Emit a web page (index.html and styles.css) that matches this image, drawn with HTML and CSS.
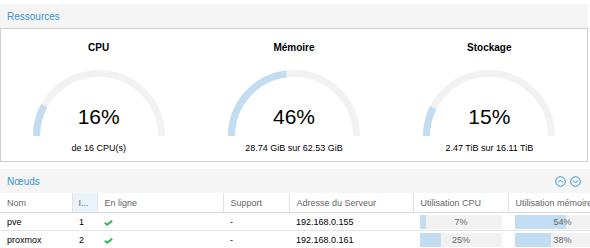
FILE: index.html
```html
<!DOCTYPE html>
<html lang="fr">
<head>
<meta charset="UTF-8" />
<title>Centre de données</title>
<link rel="stylesheet" href="styles.css">
</head>
<body>

<div class="panel res-panel">
  <div class="panel-head">Ressources</div>
  <div class="panel-body gauges">
    <div class="gauge">
      <div class="gauge-title">CPU</div>
      <div class="gauge-dial">
        <svg width="132" height="66" viewBox="0 0 132 66">
          <path class="track" d="M3.5 66 A62.5 62.5 0 0 1 128.5 66" />
          <path class="fill" d="M3.5 66 A62.5 62.5 0 0 1 128.5 66" pathLength="100" stroke-dasharray="16 100" />
        </svg>
        <div class="gauge-value">16%</div>
      </div>
      <div class="gauge-text">de 16 CPU(s)</div>
    </div>
    <div class="gauge">
      <div class="gauge-title">Mémoire</div>
      <div class="gauge-dial">
        <svg width="132" height="66" viewBox="0 0 132 66">
          <path class="track" d="M3.5 66 A62.5 62.5 0 0 1 128.5 66" />
          <path class="fill" d="M3.5 66 A62.5 62.5 0 0 1 128.5 66" pathLength="100" stroke-dasharray="46 100" />
        </svg>
        <div class="gauge-value">46%</div>
      </div>
      <div class="gauge-text">28.74 GiB sur 62.53 GiB</div>
    </div>
    <div class="gauge">
      <div class="gauge-title">Stockage</div>
      <div class="gauge-dial">
        <svg width="132" height="66" viewBox="0 0 132 66">
          <path class="track" d="M3.5 66 A62.5 62.5 0 0 1 128.5 66" />
          <path class="fill" d="M3.5 66 A62.5 62.5 0 0 1 128.5 66" pathLength="100" stroke-dasharray="15 100" />
        </svg>
        <div class="gauge-value">15%</div>
      </div>
      <div class="gauge-text">2.47 TiB sur 16.11 TiB</div>
    </div>
  </div>
</div>

<div class="panel nodes-panel">
  <div class="panel-head">
    <span>Nœuds</span>
    <span class="tools">
      <svg width="11" height="11" viewBox="0 0 11 11"><circle cx="5.5" cy="5.5" r="4.8" /><path d="M3 6.6 L5.5 4.1 L8 6.6" /></svg>
      <svg width="11" height="11" viewBox="0 0 11 11"><circle cx="5.5" cy="5.5" r="4.8" /><path d="M3 4.4 L5.5 6.9 L8 4.4" /></svg>
    </span>
  </div>
  <table class="grid">
    <colgroup>
      <col style="width:72px"><col style="width:25px"><col style="width:126px"><col style="width:66px">
      <col style="width:124px"><col style="width:95px"><col style="width:108px">
    </colgroup>
    <thead>
      <tr>
        <th>Nom</th><th class="sorted">I...</th><th>En ligne</th><th>Support</th>
        <th>Adresse du Serveur</th><th>Utilisation CPU</th><th>Utilisation mémoire</th>
      </tr>
    </thead>
    <tbody>
      <tr>
        <td>pve</td><td>1</td>
        <td><svg class="check" width="9" height="6" viewBox="0 0 9 6"><path d="M0.8 2.6 L3.2 4.8 L8.2 0.8" /></svg></td>
        <td>-</td><td>192.168.0.155</td>
        <td class="barcell"><div class="bar"><div class="bar-fill" style="width:7%"></div><span>7%</span></div></td>
        <td class="barcell"><div class="bar"><div class="bar-fill" style="width:54%"></div><span>54%</span></div></td>
      </tr>
      <tr>
        <td>proxmox</td><td>2</td>
        <td><svg class="check" width="9" height="6" viewBox="0 0 9 6"><path d="M0.8 2.6 L3.2 4.8 L8.2 0.8" /></svg></td>
        <td>-</td><td>192.168.0.161</td>
        <td class="barcell"><div class="bar"><div class="bar-fill" style="width:25%"></div><span>25%</span></div></td>
        <td class="barcell"><div class="bar"><div class="bar-fill" style="width:38%"></div><span>38%</span></div></td>
      </tr>
    </tbody>
  </table>
</div>

</body>
</html>
```
FILE: styles.css
```css
html, body { margin: 0; padding: 0; background: #fff; overflow: hidden; }
body { font-family: "Liberation Sans", Arial, sans-serif; color: #000; padding-top: 4px; }

.panel { margin-right: 2px; }
.panel-head {
  height: 24px;
  background: #f5f5f5;
  color: #3892d4;
  font-size: 10px;
  padding: 0 7px;
  display: flex;
  align-items: center;
  justify-content: space-between;
}
.panel-body { border: 1px solid #d0d0d0; }

.gauges { display: flex; height: 132px; }
.gauge { flex: 1; display: flex; flex-direction: column; align-items: center; }
.gauge-title { font-size: 10px; font-weight: bold; margin-top: 13px; height: 13px; }
.gauge-dial { position: relative; margin-top: 15px; width: 132px; height: 66px; }
.gauge-dial svg { display: block; }
.gauge-dial path { fill: none; stroke-width: 7; }
.gauge-dial .track { stroke: #f2f2f2; }
.gauge-dial .fill { stroke: #c2dcf2; }
.gauge-value {
  position: absolute; left: 0; right: 0; top: 35px;
  text-align: center; font-size: 21px; line-height: 24px;
}
.gauge-text { font-size: 9px; margin-top: 7px; }

.nodes-panel { margin-top: 7px; margin-right: -40px; }
.tools { display: flex; gap: 4px; margin-right: 42px; }
.tools svg circle, .tools svg path { fill: none; stroke: #3892d4; stroke-width: 1; }

.grid { border-collapse: collapse; table-layout: fixed; width: 616px; font-size: 9px; }
.grid th {
  height: 19px; padding: 0 7px; text-align: left; font-weight: normal; color: #666;
  border-right: 1px solid #e2e2e2; border-bottom: 1px solid #d8d8d8; white-space: nowrap; overflow: hidden;
}
.grid th.sorted { background: #eaf3fb; padding: 0 6px; }
.grid td { height: 17px; padding: 0 7px; border-bottom: 1px solid #e3e3e3; white-space: nowrap; }
.check { display: block; margin-top: 2px; }
.check path { fill: none; stroke: #21b84a; stroke-width: 1.8; }
.grid td.barcell { padding: 0 6px 0 7px; }
.bar { position: relative; height: 14px; background: #f2f2f2; text-align: center; color: #666; line-height: 14px; }
.bar-fill { position: absolute; left: 0; top: 0; bottom: 0; background: #c2dcf2; }
.bar span { position: relative; }
```
